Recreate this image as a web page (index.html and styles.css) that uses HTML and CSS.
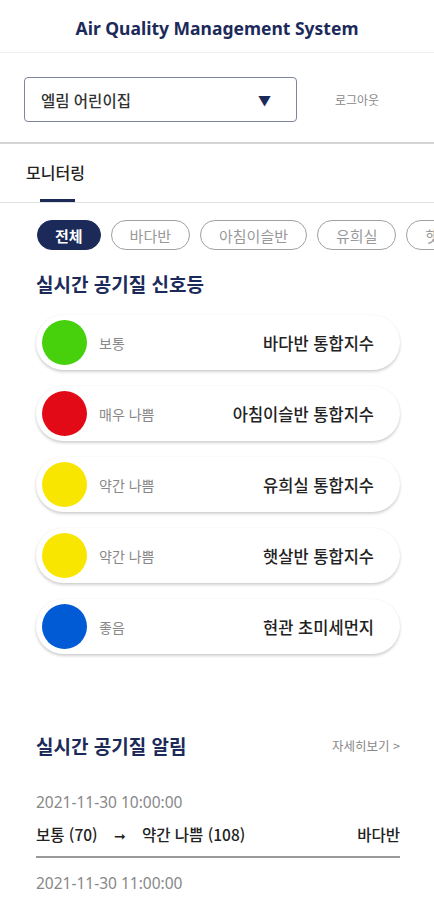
FILE: index.html
```html
<!DOCTYPE html>
<html lang="ko">
<head>
<meta charset="utf-8">
<link rel="stylesheet" href="styles.css">
</head>
<body>
<header class="app-header">
  <h1 class="app-title">Air Quality Management System</h1>
</header>
<div class="toolbar">
  <div class="select">
    <span class="select-text">엘림 어린이집</span>
    <span class="select-arrow">▼</span>
  </div>
  <span class="logout">로그아웃</span>
</div>
<nav class="tabs">
  <div class="tab active">모니터링</div>
</nav>
<div class="chips">
  <span class="chip on">전체</span>
  <span class="chip">바다반</span>
  <span class="chip">아침이슬반</span>
  <span class="chip">유희실</span>
  <span class="chip">햇살반</span>
</div>
<section class="section">
  <h2 class="section-title">실시간 공기질 신호등</h2>
  <div class="cards">
    <div class="card"><span class="dot green"></span><span class="status">보통</span><span class="name">바다반 통합지수</span></div>
    <div class="card"><span class="dot red"></span><span class="status">매우 나쁨</span><span class="name">아침이슬반 통합지수</span></div>
    <div class="card"><span class="dot yellow"></span><span class="status">약간 나쁨</span><span class="name">유희실 통합지수</span></div>
    <div class="card"><span class="dot yellow"></span><span class="status">약간 나쁨</span><span class="name">햇살반 통합지수</span></div>
    <div class="card"><span class="dot blue"></span><span class="status">좋음</span><span class="name">현관 초미세먼지</span></div>
  </div>
</section>
<section class="section alerts">
  <div class="alerts-head">
    <h2 class="section-title">실시간 공기질 알림</h2>
    <span class="more">자세히보기 &gt;</span>
  </div>
  <div class="alert">
    <div class="alert-time">2021-11-30 10:00:00</div>
    <div class="alert-row"><span class="alert-change">보통 (70) <span class="arrow">➞</span> 약간 나쁨 (108)</span><span class="alert-room">바다반</span></div>
  </div>
  <div class="alert">
    <div class="alert-time">2021-11-30 11:00:00</div>
  </div>
</section>
</body>
</html>
```
FILE: styles.css
```css
* { box-sizing: border-box; }
html, body { margin: 0; padding: 0; }
body {
  width: 434px;
  background: #fff;
  font-family: "Noto Sans", "Noto Sans CJK KR", sans-serif;
  color: #222;
  overflow: hidden;
}
.app-header {
  height: 53px;
  border-bottom: 1px solid #eeeeee;
  display: flex;
  align-items: center;
  justify-content: center;
}
.app-title {
  margin: 0;
  font-size: 17.5px;
  font-weight: 700;
  color: #1c2a5a;
  padding-top: 3px;
}
.toolbar {
  height: 91px;
  display: flex;
  align-items: center;
  padding: 4px 0 0 24px;
  border-bottom: 2px solid #d4d4d4;
}
.select {
  width: 273px;
  height: 45px;
  border: 1px solid #7d8598;
  border-radius: 4px;
  display: flex;
  align-items: center;
  justify-content: space-between;
  padding: 0 25px 0 16px;
}
.select-text {
  font-family: "Noto Sans CJK KR", sans-serif;
  font-size: 15.5px;
  font-weight: 500;
  color: #333;
}
.select-arrow {
  font-size: 13px;
  color: #1c2a5a;
}
.logout {
  margin-left: 38px;
  font-family: "Noto Sans CJK KR", sans-serif;
  font-size: 12px;
  color: #888;
}
.tabs {
  height: 59px;
  border-bottom: 1px solid #e2e2e2;
  display: flex;
  padding-left: 26px;
}
.tab {
  font-family: "Noto Sans CJK KR", sans-serif;
  font-size: 16px;
  font-weight: 500;
  color: #222;
  padding-top: 16px;
  position: relative;
}
.tab.active::after {
  content: "";
  position: absolute;
  left: 14px;
  width: 35px;
  bottom: 0;
  height: 3px;
  background: #1c2a5a;
}
.chips {
  display: flex;
  gap: 10px;
  padding: 17px 0 0 37px;
  white-space: nowrap;
  overflow: hidden;
}
.chip {
  flex: none;
  height: 30px;
  padding: 0 18px;
  border: 1px solid #a0a0a0;
  border-radius: 15px;
  display: flex;
  align-items: center;
  font-family: "Noto Sans CJK KR", sans-serif;
  font-size: 15px;
  color: #999;
}
.chip.on {
  background: #1c2a5a;
  border-color: #1c2a5a;
  color: #fff;
  font-weight: 700;
  padding: 0 17px;
}
.section { padding: 0 34px 0 36px; }
.section-title {
  margin: 0;
  font-family: "Noto Sans CJK KR", sans-serif;
  font-size: 19px;
  font-weight: 700;
  color: #1c2a5a;
}
.section > .section-title { padding-top: 20px; }
.cards {
  display: flex;
  flex-direction: column;
  gap: 16px;
  margin-top: 18px;
}
.card {
  height: 55px;
  border-radius: 28px;
  background: #fff;
  box-shadow: 0 2px 3px rgba(0,0,0,0.18), 0 0 2px rgba(0,0,0,0.06);
  display: flex;
  align-items: center;
  padding: 0 26px 0 6px;
}
.dot {
  width: 45px;
  height: 45px;
  border-radius: 50%;
  flex: none;
}
.green { background: #47d10c; }
.red { background: #e30a17; }
.yellow { background: #f8e600; }
.blue { background: #005bd4; }
.status {
  margin-left: 12px;
  font-family: "Noto Sans CJK KR", sans-serif;
  font-size: 14px;
  color: #888;
}
.name {
  margin-left: auto;
  font-family: "Noto Sans CJK KR", sans-serif;
  font-size: 16.5px;
  font-weight: 500;
  color: #222;
}
.alerts { margin-top: 78px; }
.alerts-head {
  display: flex;
  justify-content: space-between;
  align-items: center;
}
.more {
  font-family: "Noto Sans CJK KR", sans-serif;
  font-size: 12.5px;
  color: #888;
}
.alert-time {
  font-family: "Noto Sans", sans-serif;
  font-size: 15.5px;
  color: #888;
}
.alerts-head + .alert { margin-top: 32px; }
.alert-row {
  display: flex;
  justify-content: space-between;
  padding: 10px 0 11px;
  border-bottom: 2px solid #999;
  font-family: "Noto Sans CJK KR", sans-serif;
  font-size: 15.5px;
  font-weight: 500;
  color: #222;
}
.arrow { margin: 0 12px; font-family: "DejaVu Sans", sans-serif; font-size: 14px; }
.alert + .alert { margin-top: 14px; }
```
